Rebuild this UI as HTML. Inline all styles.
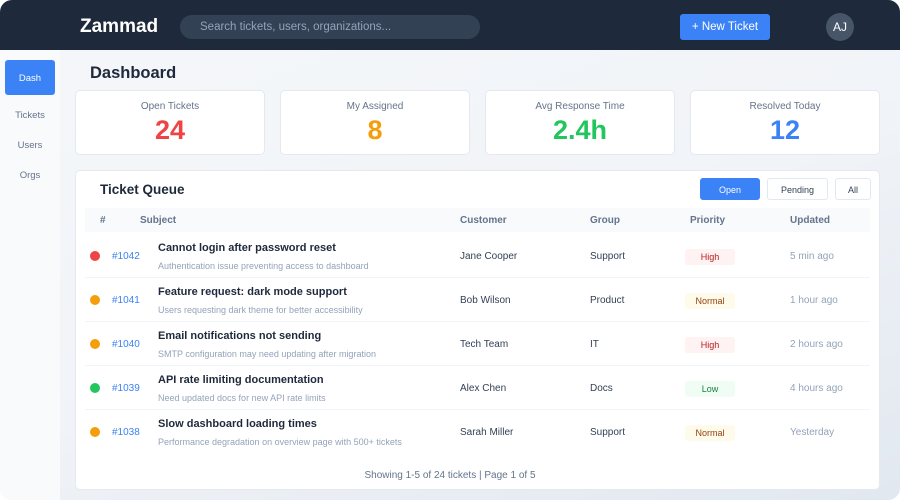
<!DOCTYPE html>
<html><head><meta charset="utf-8"><style>
*{box-sizing:border-box;margin:0;padding:0}
body{width:900px;height:500px;background:#fff;font-family:"Liberation Sans",sans-serif;overflow:hidden;position:relative}
.frame{position:absolute;inset:0;border-radius:12px;overflow:hidden;background:linear-gradient(160deg,#f5f7fa 0%,#f1f4f8 50%,#e2e8f0 100%)}
.top{position:absolute;left:0;top:0;width:900px;height:50px;background:#1e293b}
.logo{position:absolute;left:80px;top:16px;color:#fff;font-size:19px;font-weight:bold}
.search{position:absolute;left:180px;top:15px;width:300px;height:24px;border-radius:12px;background:#334155;color:#94a3b8;font-size:11.5px;line-height:24px;padding-left:20px}
.nt{position:absolute;left:680px;top:14px;width:90px;height:26px;background:#3b82f6;border-radius:3px;color:#fff;font-size:11.5px;line-height:26px;text-align:center}
.av{position:absolute;left:826px;top:13px;width:28px;height:28px;border-radius:50%;background:#475569;color:#fff;font-size:12px;line-height:28px;text-align:center}
.side{position:absolute;left:0;top:50px;width:60px;height:450px;background:#f8fafc}
.side div{position:absolute;left:5px;width:50px;text-align:center;font-size:9.5px;color:#64748b}
.side .act{top:10px;height:35px;line-height:37px;background:#3b82f6;color:#fff;border-radius:3px}
h1{position:absolute;left:90px;top:64px;font-size:16.5px;color:#1e293b}
.card{position:absolute;top:90px;width:190px;height:65px;background:#fff;border:1px solid #e5e9ef;border-radius:5px;text-align:center}
.card .l{font-size:10px;color:#64748b;margin-top:10px}
.card .v{font-size:27px;font-weight:bold;margin-top:3px}
.panel{position:absolute;left:75px;top:170px;width:805px;height:320px;background:#fff;border:1px solid #e5e9ef;border-radius:5px}
.in{position:absolute;left:-1px;top:-1px;width:805px;height:320px}
.pt{position:absolute;left:25px;top:12px;font-size:13.5px;font-weight:bold;color:#1e293b}
.btn{position:absolute;top:8px;height:22px;line-height:22px;text-align:center;font-size:9px;border-radius:3px;border:1px solid #e2e8f0;color:#334155;background:#fff}
.th{position:absolute;left:10px;top:38px;width:785px;height:24px;background:#f8fafc;font-size:10px;font-weight:bold;color:#64748b}
.th span,.row span{position:absolute}
.th span{top:7px}
.row{position:absolute;left:10px;width:785px;height:44px;border-bottom:1px solid #f1f5f9}
.dot{width:10px;height:10px;border-radius:50%;left:5px;top:17px}
.id{left:27px;top:17px;font-size:10px;color:#3b82f6}
.s1{left:73px;top:8px;font-size:11px;font-weight:bold;color:#1e293b}
.s2{left:73px;top:27px;font-size:9px;color:#94a3b8}
.c{top:17px;font-size:10px;color:#334155}
.badge{left:600px;top:15px;width:50px;height:16px;line-height:16px;text-align:center;font-size:9px;border-radius:3px}
.u{left:705px;top:17px;font-size:10px;color:#94a3b8}
.hi{background:#fef2f2;color:#b91c1c}.no{background:#fffbeb;color:#92400e}.lo{background:#f0fdf4;color:#15803d}
.foot{position:absolute;left:0;width:750px;top:300px;text-align:center;font-size:10px;color:#64748b}
</style></head><body><div class="frame">
<div class="top"><div class="logo">Zammad</div><div class="search">Search tickets, users, organizations...</div><div class="nt">+ New Ticket</div><div class="av">AJ</div></div>
<div class="side"><div class="act">Dash</div><div style="top:60px">Tickets</div><div style="top:90px">Users</div><div style="top:120px">Orgs</div></div>
<h1>Dashboard</h1>
<div class="card" style="left:75px"><div class="l">Open Tickets</div><div class="v" style="color:#ef4444">24</div></div>
<div class="card" style="left:280px"><div class="l">My Assigned</div><div class="v" style="color:#f59e0b">8</div></div>
<div class="card" style="left:485px"><div class="l">Avg Response Time</div><div class="v" style="color:#22c55e">2.4h</div></div>
<div class="card" style="left:690px"><div class="l">Resolved Today</div><div class="v" style="color:#3b82f6">12</div></div>
<div class="panel"><div class="in">
<div class="pt">Ticket Queue</div>
<div class="btn" style="left:625px;width:60px;background:#3b82f6;color:#fff;border-color:#3b82f6">Open</div>
<div class="btn" style="left:692px;width:61px">Pending</div>
<div class="btn" style="left:760px;width:36px">All</div>
<div class="th"><span style="left:15px">#</span><span style="left:55px">Subject</span><span style="left:375px">Customer</span><span style="left:505px">Group</span><span style="left:605px">Priority</span><span style="left:705px">Updated</span></div>
<div class="row" style="top:64px"><span class="dot" style="background:#ef4444"></span><span class="id">#1042</span><span class="s1">Cannot login after password reset</span><span class="s2">Authentication issue preventing access to dashboard</span><span class="c" style="left:375px">Jane Cooper</span><span class="c" style="left:505px">Support</span><span class="badge hi">High</span><span class="u">5 min ago</span></div>
<div class="row" style="top:108px"><span class="dot" style="background:#f59e0b"></span><span class="id">#1041</span><span class="s1">Feature request: dark mode support</span><span class="s2">Users requesting dark theme for better accessibility</span><span class="c" style="left:375px">Bob Wilson</span><span class="c" style="left:505px">Product</span><span class="badge no">Normal</span><span class="u">1 hour ago</span></div>
<div class="row" style="top:152px"><span class="dot" style="background:#f59e0b"></span><span class="id">#1040</span><span class="s1">Email notifications not sending</span><span class="s2">SMTP configuration may need updating after migration</span><span class="c" style="left:375px">Tech Team</span><span class="c" style="left:505px">IT</span><span class="badge hi">High</span><span class="u">2 hours ago</span></div>
<div class="row" style="top:196px"><span class="dot" style="background:#22c55e"></span><span class="id">#1039</span><span class="s1">API rate limiting documentation</span><span class="s2">Need updated docs for new API rate limits</span><span class="c" style="left:375px">Alex Chen</span><span class="c" style="left:505px">Docs</span><span class="badge lo">Low</span><span class="u">4 hours ago</span></div>
<div class="row" style="top:240px;border:none"><span class="dot" style="background:#f59e0b"></span><span class="id">#1038</span><span class="s1">Slow dashboard loading times</span><span class="s2">Performance degradation on overview page with 500+ tickets</span><span class="c" style="left:375px">Sarah Miller</span><span class="c" style="left:505px">Support</span><span class="badge no">Normal</span><span class="u">Yesterday</span></div>
<div class="foot">Showing 1-5 of 24 tickets | Page 1 of 5</div>
</div></div>
</div></body></html>
